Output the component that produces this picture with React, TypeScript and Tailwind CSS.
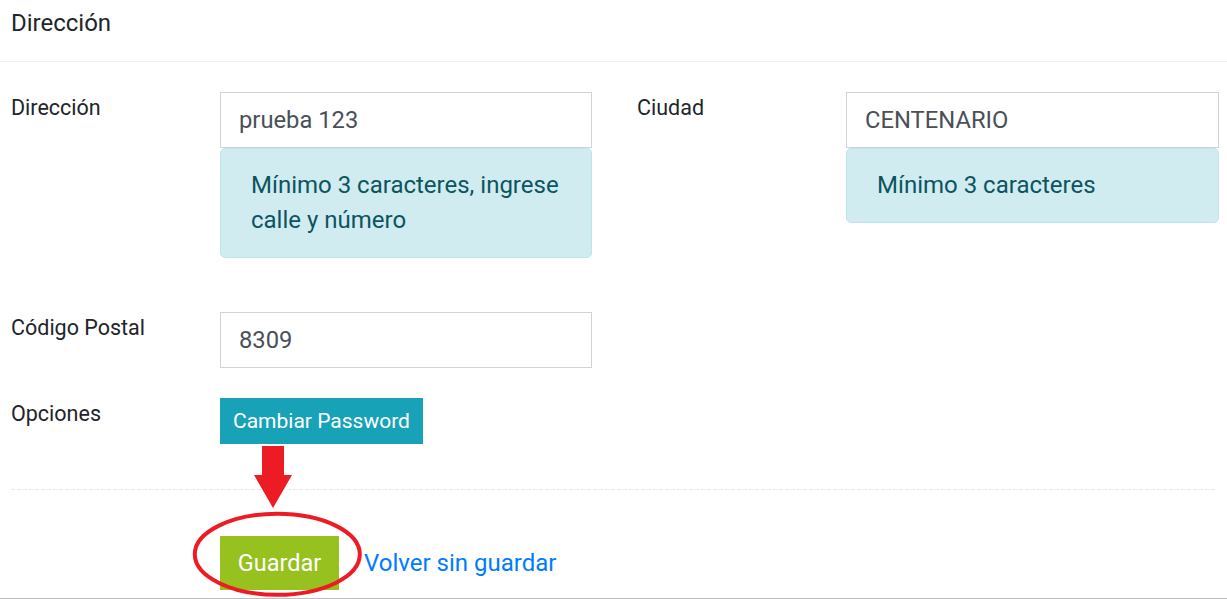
import React from "react";

function Label({ children, className = "" }: { children: React.ReactNode; className?: string }) {
  return (
    <div className={"w-[209px] shrink-0 text-[21.5px] leading-[32px] text-[#212529] " + className}>
      {children}
    </div>
  );
}

function Input({ value, className = "" }: { value: string; className?: string }) {
  return (
    <div
      className={
        "h-[56px] border border-[#ced4da] bg-white flex items-center pl-[18px] text-[23.75px] leading-[35px] text-[#495057] " +
        className
      }
    >
      {value}
    </div>
  );
}

function Alert({ children }: { children: React.ReactNode }) {
  return (
    <div className="border border-[#bee5eb] bg-[#d1ecf1] rounded-[5px] px-[30px] py-[19px] text-[24px] leading-[35px] text-[#0c5460]">
      {children}
    </div>
  );
}

export default function App() {
  return (
    <div className="relative w-[1227px] h-[599px] overflow-hidden bg-white font-['Roboto',_'Liberation_Sans',_sans-serif] text-[#212529]">
      <div className="h-[62px] border-b border-[#f0f0f0] pl-[11px] pt-[6px] text-[24px] leading-[35px]">
        Dirección
      </div>

      <div className="pt-[30px]">
        {/* Row 1 */}
        <div className="flex items-start pl-[11px]">
          <Label>Dirección</Label>
          <div className="w-[372px] shrink-0">
            <Input value="prueba 123" />
            <Alert>Mínimo 3 caracteres, ingrese calle y número</Alert>
          </div>
          <Label className="ml-[45px]">Ciudad</Label>
          <div className="w-[373px] shrink-0">
            <Input value="CENTENARIO" />
            <Alert>Mínimo 3 caracteres</Alert>
          </div>
        </div>

        {/* Row 2 */}
        <div className="flex items-start pl-[11px] mt-[54px]">
          <Label>Código Postal</Label>
          <div className="w-[372px] shrink-0">
            <Input value="8309" />
          </div>
        </div>

        {/* Row 3 */}
        <div className="flex items-start pl-[11px] mt-[30px]">
          <Label>Opciones</Label>
          <button className="h-[46px] px-[13px] bg-[#17a2b8] text-white text-[21px] leading-[32px]">
            Cambiar Password
          </button>
        </div>

        {/* dashed separator */}
        <div className="mt-[45px] ml-[11px] mr-[10px] h-px bg-[repeating-linear-gradient(to_right,#e8e8e8_0px,#e8e8e8_4px,transparent_4px,transparent_6px)]" />

        {/* Actions */}
        <div className="flex items-center pl-[220px] mt-[46px]">
          <button className="h-[54px] w-[119px] bg-[#96c11f] text-white text-[23.5px] leading-[35px]">
            Guardar
          </button>
          <a className="ml-[25px] text-[#007bff] text-[24px] leading-[35px]">Volver sin guardar</a>
        </div>

        <div className="mt-[8px] h-px bg-[#bdbdbd]" />
      </div>

      {/* annotation overlay */}
      <svg
        className="absolute left-0 top-0 pointer-events-none"
        width="1227"
        height="599"
        viewBox="0 0 1227 599"
      >
        <polygon
          points="262,446 284,446 284,475 292,475 273,508 254,475 262,475"
          fill="#ed1c24"
        />
        <ellipse cx="277.3" cy="554.3" rx="82.5" ry="40.5" fill="none" stroke="#ed1c24" strokeWidth="4" />
      </svg>
    </div>
  );
}
